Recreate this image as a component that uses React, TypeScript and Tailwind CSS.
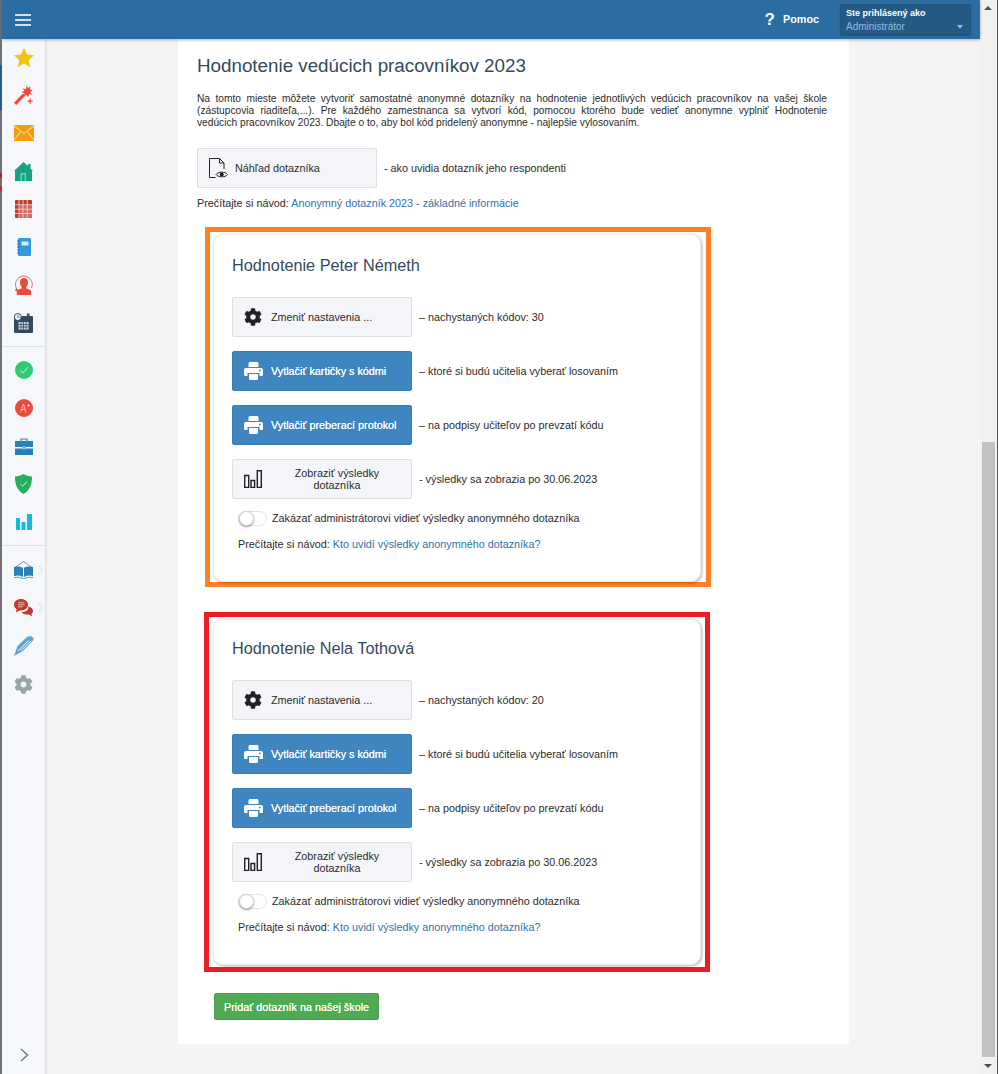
import React from "react";
import { FaCog } from "react-icons/fa";

const IconStar = () => (
  <svg width="20" height="19" viewBox="0 0 20 19">
    <path d="M10 0l3 6.400 7 .9-5.100 4.800 1.300 6.900L10 15.600 3.800 19l1.300-6.900L0 7.300l7-.9z" fill="#f1c40f" />
  </svg>
);

const IconWand = () => (
  <svg width="20" height="20" viewBox="0 0 20 20">
    <path d="M0 17.800 9 8.500l2.200 2.200-9 9.300z" fill="#e74c3c" />
    <path d="M12.800 0l1 3 2.800-1.500-.8 3 3 .6-2.500 1.900 1.700 2.500-3-.4-.4 3-2.200-2.200-2.400 1.400.5-3-3-1 2.800-1.300-1.200-2.800 2.800 1z" fill="#e74c3c" />
    <path d="M15.500 13.500h1.300v2h2v1.300h-2v2h-1.300v-2h-2v-1.300h2z" fill="#e74c3c" />
  </svg>
);

const IconMail = () => (
  <svg width="20" height="16" viewBox="0 0 20 16">
    <rect width="20" height="16" fill="#f39c12" />
    <path d="M0 .800 10 8.500 20 .800M0 15l7-8.500M20 15l-7-8.500" fill="none" stroke="#fde3b0" strokeWidth="1" />
  </svg>
);

const IconHome = () => (
  <svg width="19" height="19" viewBox="0 0 19 19">
    <path d="M9.500 0 14 4V2h2.500v4.500L19 9h-1v10H1V9H0z" fill="#16a085" />
    <path d="M6.500 11h5.500v8h-1.400v-6.600H7.900V19H6.500z" fill="#7fcdbd" />
  </svg>
);

const IconGrid = () => (
  <svg width="17" height="18" viewBox="0 0 17 18">
    <rect width="17" height="18" rx="1" fill="#c0392b" />
    <rect x="4.500" y="5" width="12.500" height="13" fill="#cf6d64" />
    <path d="M4 0v18M8 0v18M12.200 0v18M0 4.700h17M0 9.200h17M0 13.500h17" stroke="#f3d4d0" strokeWidth=".9" />
  </svg>
);

const IconNotebook = () => (
  <svg width="14" height="18" viewBox="0 0 14 18">
    <rect x="1" width="13" height="18" rx="1.200" fill="#3498db" />
    <rect x="4.500" y="3.500" width="7" height="4" fill="#d6eaf8" />
    <path d="M0 3h2.500M0 6h2.500M0 9h2.500M0 12h2.500M0 15h2.500" stroke="#1f6fa8" strokeWidth="1" />
  </svg>
);

const IconUser = () => (
  <svg width="18" height="20" viewBox="0 0 18 20">
    <path d="M9 3c2.600 0 4 2 4 4.400 0 2-.8 3.600-1.800 4.600v1.300c2.400 1 4.300 1.400 5 3V20H1.800v-3.700c.7-1.600 2.600-2 5-3V12c-1-1-1.800-2.600-1.800-4.600C5 5 6.400 3 9 3z" fill="#e74c3c" />
    <path d="M1.800 14A8.400 8.400 0 1 1 16.500 13" fill="none" stroke="#e74c3c" strokeWidth=".8" />
    <circle cx="1.500" cy="15" r="1.300" fill="#e74c3c" />
  </svg>
);

const IconCalendar = () => (
  <svg width="19" height="20" viewBox="0 0 19 20">
    <rect y="3" width="19" height="17" rx="1" fill="#34495e" />
    <rect x="13" y="0.500" width="2.500" height="4" fill="#34495e" />
    <path d="M4.500 9h10v7.500h-10z" fill="#d5dbe0" />
    <path d="M7 9v7.500M9.500 9v7.500M12 9v7.500M4.500 11.500h10M4.500 14h10" stroke="#34495e" strokeWidth=".8" />
    <circle cx="3.800" cy="4" r="3.500" fill="#f5f7fa" stroke="#34495e" strokeWidth="1" />
    <path d="M3.800 2v2.200H5.500" fill="none" stroke="#34495e" strokeWidth=".8" />
  </svg>
);

const IconCheckCircle = () => (
  <svg width="18" height="18" viewBox="0 0 18 18">
    <circle cx="9" cy="9" r="9" fill="#2ecc71" />
    <path d="M5.500 9.500 8 12l4.800-5.800" fill="none" stroke="#c9f2da" strokeWidth="1" />
  </svg>
);

const IconGrade = () => (
  <svg width="18" height="18" viewBox="0 0 18 18">
    <circle cx="9" cy="9" r="9" fill="#e74c3c" />
    <path d="M5.500 13.500 8.500 5l2.500 8.500M6.500 10.500h3.800M12 6.500h3M13.500 5v3" fill="none" stroke="#f6c4be" strokeWidth=".9" />
  </svg>
);

const IconBriefcase = () => (
  <svg width="18" height="17" viewBox="0 0 18 17">
    <path d="M6 3V1h6v2" fill="none" stroke="#2980b9" strokeWidth="1.200" />
    <path d="M0 3h18v6H0zM0 10.500h18V17H0z" fill="#2980b9" />
    <circle cx="9" cy="9.800" r="1.400" fill="#2980b9" stroke="#d6eaf8" strokeWidth=".7" />
  </svg>
);

const IconShield = () => (
  <svg width="17" height="20" viewBox="0 0 17 20">
    <path d="M8.500 0c2.500 1.500 5.500 2.300 8.500 2.500 0 7-1.500 13.500-8.500 17.500C1.500 16 0 9.500 0 2.500 3 2.300 6 1.500 8.500 0z" fill="#27ae60" />
    <path d="M5.500 10 7.800 12.200l4-4.500" fill="none" stroke="#d4f3e1" strokeWidth="1" />
  </svg>
);

const IconChart = () => (
  <svg width="16" height="16" viewBox="0 0 16 16">
    <path d="M0 4h4v12H0zM5.500 8h4v8h-4zM11 0h5v16h-5z" fill="#12bcd9" />
  </svg>
);

const IconBook = () => (
  <svg width="19" height="18" viewBox="0 0 19 18">
    <path d="M1 6.500 9.500.5 18 6.500" fill="none" stroke="#2980b9" strokeWidth=".8" />
    <path d="M0 6c3-1 6-.8 9 .8V16c-3-1.500-6-1.800-9-.8zM19 6c-3-1-6-.8-9 .8V16c3-1.500 6-1.800 9-.8z" fill="#2980b9" />
    <path d="M0 16.800c3-1 6-.5 9.500 1 3.500-1.500 6.500-2 9.500-1" fill="none" stroke="#2980b9" strokeWidth=".8" />
  </svg>
);

const IconChat = () => (
  <svg width="19" height="19" viewBox="0 0 19 19">
    <path d="M7 0c4 0 7 2.500 7 5.800s-3 5.700-7 5.700l-1.500-.1L2 13.500l.6-3.200C1 9.200 0 7.600 0 5.800 0 2.500 3 0 7 0z" fill="#c0392b" />
    <path d="M4 3.800h6.500M4 5.800h6.500M4 7.800h4.500" stroke="#f0c6c1" strokeWidth=".9" />
    <path d="M14.800 7.500c2.500.7 4.200 2.300 4.200 4.300 0 1.200-.5 2.300-1.500 3l.5 2.700-3-2h-2.500c-2.300 0-4.300-1-5-2.500 4 .3 7.500-2 6.800-5.500z" fill="#c0392b" />
  </svg>
);

const IconPen = () => (
  <svg width="20" height="20" viewBox="0 0 20 20">
    <path d="M0 20 3.500 10 12.500 1.500c2-1.800 5-1.500 6.500 0 1 1 .5 2.500-.5 3.500L9 15z" fill="#5aa5e0" />
    <path d="M4 15 14.500 4.500M7 14.500 17 5" stroke="#f5f7fa" strokeWidth="1" />
  </svg>
);

const IconPrint = () => (
  <svg width="19" height="18" viewBox="0 0 19 18">
    <path d="M4.500 5V1.500C4.500.700 5.200 0 6 0h7c.8 0 1.500.7 1.500 1.500V5z" fill="#fff" />
    <path d="M2 6h15c1.100 0 2 .9 2 2v5c0 .6-.4 1-1 1h-2.500v-3h-12v3H1c-.6 0-1-.4-1-1V8c0-1.100.9-2 2-2z" fill="#fff" />
    <path d="M5 12h9v4.500c0 .8-.6 1.500-1.400 1.500H6.400C5.600 18 5 17.300 5 16.500z" fill="#fff" />
    <circle cx="15.800" cy="8.500" r=".9" fill="#3f85c0" />
  </svg>
);

const BarsOutline = () => (
  <svg width="18" height="18" viewBox="0 0 18 18">
    <path d="M.7 5.500h4v12h-4zM7 10.500h3.600v7H7zM13.300 .7h4v16.800h-4z" fill="none" stroke="#222" strokeWidth="1.400" />
  </svg>
);

const FileEye = () => (
  <svg width="19" height="20" viewBox="0 0 19 20">
    <path d="M.5 15V.5h10l4.500 4.500V11M.5 15v4.500h6" fill="none" stroke="#222" strokeWidth="1" />
    <path d="M10.500.5V5H15" fill="none" stroke="#222" strokeWidth="1" />
    <path d="M7 16.500c1.800-3 9.500-3.200 11.500 0-2 3.200-9.700 3-11.500 0z" fill="none" stroke="#222" strokeWidth="1" />
    <circle cx="12.700" cy="16.500" r="2" fill="#222" />
  </svg>
);

const SideIcon = ({ children, arrow }: { children: React.ReactNode; arrow?: boolean }) => (
  <div className="relative flex h-[38px] items-center justify-center">
    {children}
    {arrow && (
      <svg className="absolute left-[36px] top-[14px]" width="5" height="10" viewBox="0 0 5 10">
        <path d="M.5.500 4.500 5l-4 4.500" fill="none" stroke="#d5d8dc" strokeWidth="1" />
      </svg>
    )}
  </div>
);

const Sidebar = () => (
  <aside className="flex w-[45px] shrink-0 flex-col border-r-2 border-[#e3e5e8] bg-[#f5f7fa]">
    <div className="-mt-px" />
    <SideIcon><IconStar /></SideIcon>
    <SideIcon><IconWand /></SideIcon>
    <SideIcon><IconMail /></SideIcon>
    <SideIcon><IconHome /></SideIcon>
    <SideIcon><IconGrid /></SideIcon>
    <SideIcon><IconNotebook /></SideIcon>
    <SideIcon><IconUser /></SideIcon>
    <SideIcon><IconCalendar /></SideIcon>
    <div className="mb-[4px] mt-[4px] h-px bg-[#dfe2e6]" />
    <SideIcon><IconCheckCircle /></SideIcon>
    <SideIcon><IconGrade /></SideIcon>
    <SideIcon><IconBriefcase /></SideIcon>
    <SideIcon><IconShield /></SideIcon>
    <SideIcon><IconChart /></SideIcon>
    <div className="mb-[5px] mt-[4px] h-px bg-[#dfe2e6]" />
    <SideIcon arrow><IconBook /></SideIcon>
    <SideIcon arrow><IconChat /></SideIcon>
    <SideIcon><IconPen /></SideIcon>
    <SideIcon><FaCog className="h-[19px] w-[19px] text-[#95a5a6]" /></SideIcon>
    <div className="mt-auto flex h-[38px] items-center justify-center pb-[1px] pl-[2px]">
      <svg width="9" height="14" viewBox="0 0 9 14">
        <path d="M1 1l6.500 6L1 13" fill="none" stroke="#64809c" strokeWidth="1.500" />
      </svg>
    </div>
  </aside>
);

const Header = () => (
  <header className="relative z-10 flex h-[39px] shrink-0 items-center bg-[#2b6da3] pl-[13px] pr-[9px] shadow-[0_1px_3px_rgba(0,0,0,0.3)]">
    <div className="flex w-[16px] flex-col gap-[3px]">
      <span className="h-[2px] bg-white/80" />
      <span className="h-[2px] bg-white/80" />
      <span className="h-[2px] bg-white/80" />
    </div>
    <div className="ml-auto flex items-center gap-[8px] text-white">
      <span className="text-[17px] font-bold leading-none">?</span>
      <span className="text-[10.800px] font-bold">Pomoc</span>
    </div>
    <div className="ml-[21px] flex h-[31px] w-[131px] flex-col justify-center rounded-[2px] border border-[#24557c] bg-[#255a84] px-[5px] shadow-[0_1px_2px_rgba(0,0,0,0.25)]">
      <span className="text-[9px] font-bold leading-[14px] text-white">Ste prihlásený ako</span>
      <div className="flex items-center justify-between pr-[2px]">
        <span className="text-[10px] leading-[14px] text-[#8db8e4]">Administrátor</span>
        <span className="h-0 w-0 border-x-[3.500px] border-t-[4px] border-x-transparent border-t-[#9cb6cf]" />
      </div>
    </div>
  </header>
);

const Action = ({
  icon,
  primary,
  children,
  note,
}: {
  icon: React.ReactNode;
  primary?: boolean;
  children: React.ReactNode;
  note: string;
}) => (
  <div className="flex items-center gap-[7px]">
    <div
      className={
        primary
          ? "flex h-[40px] w-[180px] items-center rounded-[2px] border border-[#3a7cb2] bg-[#3f85c0] pl-[11px] text-[10.800px] text-white [text-shadow:0_0_0.6px_#fff]"
          : "flex h-[40px] w-[180px] items-center rounded-[2px] border border-[#dddfe3] bg-[#f4f5f9] pl-[11px] text-[10.800px] text-[#2b2b2b]"
      }
    >
      <span className="flex w-[20px] shrink-0">{icon}</span>
      <span className="ml-[7px] flex-1 pr-[8px] leading-[12px]">{children}</span>
    </div>
    <span className="text-[10.800px] text-[#2b2b2b]">{note}</span>
  </div>
);

const Survey = ({
  name,
  codes,
  frame,
  inner,
}: {
  name: string;
  codes: number;
  frame: string;
  inner: string;
}) => (
  <div className={`h-[360px] w-[506px] border-[5px] ${frame}`}>
    <div className={`h-full rounded-[10px] border border-[#ececec] bg-white pl-[18px] shadow-[1px_1px_3px_rgba(0,0,0,0.3)] ${inner}`}>
      <h2 className="mb-[21px] text-[16.250px] leading-[22px] text-[#34495e]">Hodnotenie {name}</h2>
      <div className="flex flex-col gap-[14px]">
        <Action icon={<FaCog className="h-[18px] w-[18px] text-[#222]" />} note={`– nachystaných kódov: ${codes}`}>
          Zmeniť nastavenia ...
        </Action>
        <Action primary icon={<IconPrint />} note="– ktoré si budú učitelia vyberať losovaním">
          Vytlačiť kartičky s kódmi
        </Action>
        <Action primary icon={<IconPrint />} note="– na podpisy učiteľov po prevzatí kódu">
          Vytlačiť preberací protokol
        </Action>
        <Action icon={<BarsOutline />} note="- výsledky sa zobrazia po 30.06.2023">
          <span className="block text-center">
            Zobraziť výsledky
            <br />
            dotazníka
          </span>
        </Action>
      </div>
      <div className="ml-[6px] mt-[11px] flex items-center gap-[5px] text-[10.800px] text-[#2b2b2b]">
        <span className="h-[15px] w-[29px] rounded-full border border-[#e2e3e5] bg-white">
          <span className="block h-[15px] w-[15px] -translate-y-px rounded-full border border-[#d0d0d0] bg-white shadow-[0_1px_2px_rgba(0,0,0,0.4)]" />
        </span>
        Zakázať administrátorovi vidieť výsledky anonymného dotazníka
      </div>
      <p className="ml-[6px] mt-[10px] text-[10.800px] text-[#2b2b2b]">
        Prečítajte si návod: <span className="text-[#2f72a8]">Kto uvidí výsledky anonymného dotazníka?</span>
      </p>
    </div>
  </div>
);

export default function App() {
  return (
    <div className="flex h-[1074px] w-[998px] overflow-hidden bg-[#f4f4f4] font-['Liberation_Sans',Arial,sans-serif]">
      <div className="flex w-[2px] shrink-0 flex-col bg-[#6f7378]">
        <div className="mt-[65px] h-[45px] bg-[#1f5f94]" />
        <div className="mt-[63px] h-[5px] bg-[#c9202c]" />
        <div className="mt-[8px] h-[5px] bg-[#c9202c]" />
      </div>
      <div className="flex min-w-0 flex-1 flex-col">
        <Header />
        <div className="flex min-h-0 flex-1">
          <Sidebar />
          <main className="flex-1 pl-[131px]">
            <div className="h-[1005px] w-[671px] bg-white pl-[19px] pt-[14px]">
              <h1 className="text-[18.800px] leading-[26px] text-[#34495e]">Hodnotenie vedúcich pracovníkov 2023</h1>
              <p className="mt-[14px] w-[630px] text-justify text-[10.200px] leading-[12px] text-[#2b2b2b]">
                <span className="block [text-align-last:justify]">
                  Na tomto mieste môžete vytvoriť samostatné anonymné dotazníky na hodnotenie jednotlivých vedúcich pracovníkov na vašej škole
                </span>
                <span className="block [text-align-last:justify]">
                  (zástupcovia riaditeľa,...). Pre každého zamestnanca sa vytvorí kód, pomocou ktorého bude vedieť anonymne vyplniť Hodnotenie
                </span>
                <span className="block">
                  vedúcich pracovníkov 2023. Dbajte o to, aby bol kód pridelený anonymne - najlepšie vylosovaním.
                </span>
              </p>
              <div className="mt-[19px] flex items-center gap-[7px]">
                <div className="flex h-[40px] w-[180px] items-center rounded-[2px] border border-[#dddfe3] bg-[#f4f5f9] pl-[11px] text-[10.800px] text-[#2b2b2b]">
                  <FileEye />
                  <span className="ml-[7px]">Náhľad dotazníka</span>
                </div>
                <span className="text-[10.800px] text-[#2b2b2b]">- ako uvidia dotazník jeho respondenti</span>
              </div>
              <p className="mt-[7px] text-[10.800px] text-[#2b2b2b]">
                Prečítajte si návod: <span className="text-[#2f72a8]">Anonymný dotazník 2023 - základné informácie</span>
              </p>
              <div className="ml-[8px] mt-[16px]">
                <Survey name="Peter Németh" codes={30} frame="border-[#ff7f27] pl-[3px] pr-[5px] pt-[2px]" inner="pt-[19px]" />
              </div>
              <div className="ml-[7px] mt-[25px]">
                <Survey name="Nela Tothová" codes={20} frame="border-[#ed1c24] pb-[2px] pl-[4px] pr-[4px] pt-[2px]" inner="pt-[17px]" />
              </div>
              <div className="ml-[17px] mt-[21px] flex h-[27px] w-[165px] items-center justify-center rounded-[2px] border border-[#4a9f4e] bg-[#4fab53] text-[10.800px] text-white [text-shadow:0_0_0.6px_#fff]">
                Pridať dotazník na našej škole
              </div>
            </div>
          </main>
        </div>
      </div>
      <div className="flex w-[18px] shrink-0 flex-col items-center border-r border-[#555] bg-[#f1f1f1] pr-[1px]">
        <span className="mt-[6px] h-0 w-0 border-x-[4px] border-b-[4px] border-x-transparent border-b-[#505050]" />
        <div className="mt-[432px] h-[615px] w-[13px] bg-[#c1c1c1]" />
        <span className="mt-[7px] h-0 w-0 border-x-[4px] border-t-[4px] border-x-transparent border-t-[#505050]" />
      </div>
    </div>
  );
}
